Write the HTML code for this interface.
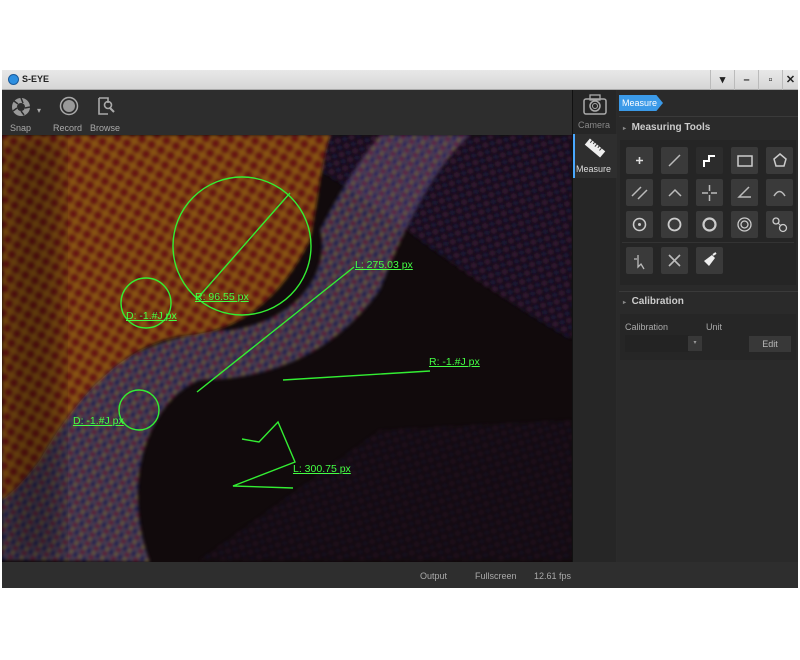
<!DOCTYPE html>
<html><head><meta charset="utf-8"><style>
*{margin:0;padding:0;box-sizing:border-box}
body{width:800px;height:660px;background:#fff;font-family:"Liberation Sans",sans-serif;position:relative;overflow:hidden}
.win{position:absolute;left:2px;top:70px;width:796px;height:518px;background:#2b2b2b}
.title{position:absolute;left:0;top:0;width:796px;height:20px;background:linear-gradient(#e8e8e8,#d6d6d6);border-bottom:1px solid #aaa}
.title .t{position:absolute;left:20px;top:4px;font-size:9px;font-weight:bold;color:#222}
.logo{position:absolute;left:6px;top:4px;width:11px;height:11px;border-radius:50%;background:#2d8fe0;border:1px solid #1a5a9a}
.wb{position:absolute;top:0;width:24px;height:20px;border-left:1px solid #bbb;font-size:11px;text-align:center;line-height:20px;color:#222;font-weight:bold}
.tb{position:absolute;left:0;top:20px;width:570px;height:45px;background:#2d2d2d}
.tl{position:absolute;top:33px;font-size:9px;color:#aaa}
.img{position:absolute;left:0;top:65px;width:570px;height:427px;background:#150a0e;overflow:hidden}
.bot{position:absolute;left:0;top:492px;width:796px;height:26px;background:#2e2e2e;font-size:9px;color:#aaa}
.bot span{position:absolute;top:9px}
.side{position:absolute;left:570px;top:20px;width:44px;height:472px;background:#262626;border-left:1px solid #111}
.panel{position:absolute;left:615px;top:20px;width:181px;height:472px;background:#2a2a2a}
.btn{position:absolute;width:27px;height:27px;background:#3a3a3a;border-radius:2px}
.btn svg{width:27px;height:27px}
.lab{position:absolute;color:#4f4;font-size:10.5px;text-decoration:underline;white-space:nowrap}
</style></head><body>
<div class="win">
 <div class="title"><div class="logo"></div><div class="t">S-EYE</div>
  <div class="wb" style="left:708px">▾</div><div class="wb" style="left:732px">–</div><div class="wb" style="left:756px">▫</div><div class="wb" style="left:780px;width:16px">✕</div></div>
 <div class="tb">
  <svg style="position:absolute;left:8px;top:6px" width="22" height="22" viewBox="0 0 22 22"><circle cx="11" cy="11" r="9" fill="#999"/><circle cx="11" cy="11" r="4" fill="#2d2d2d"/><path d="M11 2L13 7M20 11L15 12M14 19L11 15M3 15L7 12M4 5L8 8" stroke="#2d2d2d" stroke-width="1.5"/></svg>
  <div style="position:absolute;left:35px;top:16px;font-size:8px;color:#aaa">▾</div>
  <div class="tl" style="left:8px">Snap</div>
  <svg style="position:absolute;left:57px;top:6px" width="20" height="20"><circle cx="10" cy="10" r="8.5" fill="none" stroke="#aaa" stroke-width="1.5"/><circle cx="10" cy="10" r="6" fill="#999"/></svg>
  <div class="tl" style="left:51px">Record</div>
  <svg style="position:absolute;left:95px;top:6px" width="18" height="20"><path d="M2 2h9v5M2 2v16h9" fill="none" stroke="#aaa" stroke-width="1.6"/><circle cx="11" cy="9" r="3.5" fill="none" stroke="#aaa" stroke-width="1.6"/><path d="M13 12l4 4" stroke="#aaa" stroke-width="2"/></svg>
  <div class="tl" style="left:88px">Browse</div>
 </div>
 <div class="img">
  <svg width="570" height="427" viewBox="2 135 570 427">
   <defs>
    <pattern id="po" width="11" height="11" patternUnits="userSpaceOnUse" patternTransform="rotate(30)"><rect width="11" height="11" fill="#a06418"/><circle cx="5.5" cy="5.5" r="4.6" fill="#7a1c14"/></pattern>
    <pattern id="pb" width="10" height="10" patternUnits="userSpaceOnUse" patternTransform="rotate(30)"><rect width="10" height="10" fill="#5a5470"/><circle cx="2.5" cy="2.5" r="2.6" fill="#22226a"/><circle cx="7.5" cy="7" r="2.6" fill="#7a1a44"/><circle cx="7.5" cy="2" r="1.6" fill="#9a8a30"/></pattern>
    <pattern id="pd" width="10" height="10" patternUnits="userSpaceOnUse" patternTransform="rotate(30)"><rect width="10" height="10" fill="#160b12"/><circle cx="3" cy="3" r="2.4" fill="#3a1a3a"/><circle cx="8" cy="8" r="2" fill="#1a1a44"/></pattern>
    <filter id="bl"><feGaussianBlur stdDeviation="1.5"/></filter>
    <filter id="bl2"><feGaussianBlur stdDeviation="12"/></filter>
   </defs>
   <rect x="2" y="135" width="570" height="427" fill="#110a0c"/>
   <path d="M230 135 H572 V340 C520 310 460 270 420 240 C380 210 340 180 300 160Z" fill="url(#pd)" filter="url(#bl)"/>
   <path d="M2 560 V420 C80 380 160 330 230 330 C300 320 330 270 320 230 C340 190 360 160 380 135 H470 C430 170 400 240 380 290 C330 360 260 380 200 380 C150 400 120 480 150 562Z" fill="url(#pb)" filter="url(#bl)" opacity="0.7"/>
   <path d="M2 135 H330 C320 170 318 200 310 240 C280 300 240 330 190 335 C130 340 80 390 40 460 C25 480 10 495 2 500Z" fill="url(#po)" filter="url(#bl)"/>
   <path d="M2 135 H330 C320 170 318 200 310 240 C280 300 240 330 190 335 C130 340 80 390 40 460 C25 480 10 495 2 500Z" fill="#000" opacity="0.15"/>
   <rect x="2" y="135" width="60" height="427" fill="#000" opacity="0.3" filter="url(#bl2)"/>
   <path d="M380 430 L572 420 V560 H200Z" fill="url(#pd)" opacity="0.4" filter="url(#bl)"/>
   <g stroke="#3e3" stroke-width="1.4" fill="none">
    <circle cx="242" cy="246" r="69"/>
    <line x1="196" y1="300" x2="290" y2="193"/>
    <circle cx="146" cy="303" r="25"/>
    <circle cx="139" cy="410" r="20"/>
    <line x1="197" y1="392" x2="354" y2="267"/>
    <line x1="283" y1="380" x2="430" y2="371"/>
    <polyline points="242,439 259,442 278,422 295,462 233,486 293,488"/>
   </g>
  </svg>
  <div class="lab" style="left:353px;top:124px">L: 275.03 px</div>
  <div class="lab" style="left:193px;top:156px">R: 96.55 px</div>
  <div class="lab" style="left:124px;top:175px">D: -1.#J px</div>
  <div class="lab" style="left:427px;top:221px">R: -1.#J px</div>
  <div class="lab" style="left:71px;top:280px">D: -1.#J px</div>
  <div class="lab" style="left:291px;top:328px">L: 300.75 px</div>
 </div>
 <div class="side">
  <svg style="position:absolute;left:10px;top:3px" width="24" height="22"><rect x="1" y="6" width="22" height="15" rx="2" fill="none" stroke="#aaa" stroke-width="1.5"/><rect x="7" y="2" width="10" height="5" fill="none" stroke="#aaa" stroke-width="1.3"/><circle cx="12" cy="13" r="5" fill="none" stroke="#aaa" stroke-width="1.5"/><circle cx="12" cy="13" r="2.5" fill="none" stroke="#aaa"/></svg>
  <div style="position:absolute;left:5px;top:30px;font-size:9px;color:#888">Camera</div>
  <div style="position:absolute;left:0;top:44px;width:44px;height:44px;background:#2e2e2e;border-left:2px solid #4aa8ff"></div>
  <svg style="position:absolute;left:10px;top:46px" width="24" height="24"><g transform="rotate(40 12 12)"><rect x="2" y="8" width="20" height="8" fill="#eee"/><path d="M5 8v3M8 8v2M11 8v3M14 8v2M17 8v3" stroke="#333"/></g></svg>
  <div style="position:absolute;left:3px;top:74px;font-size:9px;color:#ddd">Measure</div>
 </div>
 <div class="panel">
  <div style="position:absolute;left:2px;top:5px;width:44px;height:16px;background:#3b9ae8;clip-path:polygon(0 0,85% 0,100% 50%,85% 100%,0 100%);font-size:9px;color:#fff;padding:3px 0 0 3px">Measure</div>
  <div style="position:absolute;left:2px;top:26px;width:179px;border-top:1px solid #3a3a3a"></div>
  <div style="position:absolute;left:6px;top:32px;font-size:10px;color:#ccc;font-weight:bold"><span style="font-size:6px;color:#888">▸</span>&nbsp; Measuring Tools</div>
  <div style="position:absolute;left:3px;top:50px;width:176px;height:145px;background:#252525"></div>
  <div class="btn" style="left:9px;top:57px"><svg><path d="M10 13.5h7M13.5 10v7" stroke="#ddd" stroke-width="1.6"/></svg></div>
  <div class="btn" style="left:44px;top:57px"><svg><path d="M8 19L19 8" stroke="#bbb" stroke-width="1.5"/></svg></div>
  <div class="btn" style="left:79px;top:57px;background:#2c2c2c"><svg><path d="M8 20v-6h5v-5h6" fill="none" stroke="#fff" stroke-width="2"/></svg></div>
  <div class="btn" style="left:114px;top:57px"><svg><rect x="7" y="9" width="14" height="10" fill="none" stroke="#ccc" stroke-width="1.5"/></svg></div>
  <div class="btn" style="left:149px;top:57px"><svg><path d="M14 7l6 5-2 7h-8l-2-7z" fill="none" stroke="#ccc" stroke-width="1.5"/></svg></div>
  <div class="btn" style="left:9px;top:89px"><svg><path d="M6 17L15 8M12 20L21 11" stroke="#bbb" stroke-width="1.5"/></svg></div>
  <div class="btn" style="left:44px;top:89px"><svg><path d="M8 17l6-6 6 6" fill="none" stroke="#bbb" stroke-width="1.5"/></svg></div>
  <div class="btn" style="left:79px;top:89px"><svg><path d="M6 14h6M15 14h6M13.5 6v6M13.5 16v6" stroke="#bbb" stroke-width="1.5"/></svg></div>
  <div class="btn" style="left:114px;top:89px"><svg><path d="M18 8L8 18h12" fill="none" stroke="#bbb" stroke-width="1.5"/></svg></div>
  <div class="btn" style="left:149px;top:89px"><svg><path d="M8 17q5.5-9 11 0" fill="none" stroke="#bbb" stroke-width="1.5"/></svg></div>
  <div class="btn" style="left:9px;top:121px"><svg><circle cx="13.5" cy="13.5" r="6" fill="none" stroke="#ccc" stroke-width="1.5"/><circle cx="13.5" cy="13.5" r="1.5" fill="#ccc"/></svg></div>
  <div class="btn" style="left:44px;top:121px"><svg><circle cx="13.5" cy="13.5" r="6" fill="none" stroke="#ccc" stroke-width="1.8"/></svg></div>
  <div class="btn" style="left:79px;top:121px"><svg><circle cx="13.5" cy="13.5" r="6" fill="none" stroke="#ccc" stroke-width="2.2"/></svg></div>
  <div class="btn" style="left:114px;top:121px"><svg><circle cx="13.5" cy="13.5" r="6.5" fill="none" stroke="#ccc" stroke-width="1.3"/><circle cx="13.5" cy="13.5" r="3.5" fill="none" stroke="#ccc" stroke-width="1.3"/></svg></div>
  <div class="btn" style="left:149px;top:121px"><svg><circle cx="10" cy="10" r="3" fill="none" stroke="#ccc" stroke-width="1.3"/><circle cx="17" cy="17" r="3.5" fill="none" stroke="#ccc" stroke-width="1.3"/><path d="M12 12l3 3" stroke="#ccc"/></svg></div>
  <div style="position:absolute;left:5px;top:152px;width:172px;border-top:1px solid #333"></div>
  <div class="btn" style="left:9px;top:157px"><svg><path d="M12 8v12l3-3 3 5M8 12h3" fill="none" stroke="#bbb" stroke-width="1.3"/></svg></div>
  <div class="btn" style="left:44px;top:157px"><svg><path d="M8 8q6 6 11 11M19 8q-6 6-11 11" fill="none" stroke="#bbb" stroke-width="1.6"/></svg></div>
  <div class="btn" style="left:79px;top:157px"><svg><path d="M8 14l8-6 3 3-6 8z" fill="#eee"/><path d="M17 8l3-2" stroke="#eee" stroke-width="2"/></svg></div>
  <div style="position:absolute;left:2px;top:201px;width:179px;border-top:1px solid #3a3a3a"></div>
  <div style="position:absolute;left:6px;top:206px;font-size:10px;color:#ccc;font-weight:bold"><span style="font-size:6px;color:#888">▸</span>&nbsp; Calibration</div>
  <div style="position:absolute;left:3px;top:224px;width:176px;height:46px;background:#262626"></div>
  <div style="position:absolute;left:8px;top:232px;font-size:9px;color:#aaa">Calibration</div>
  <div style="position:absolute;left:89px;top:232px;font-size:9px;color:#aaa">Unit</div>
  <div style="position:absolute;left:8px;top:245px;width:64px;height:17px;background:#232323"></div>
  <div style="position:absolute;left:71px;top:246px;width:14px;height:15px;background:#383838;font-size:6px;color:#999;text-align:center;line-height:15px">▾</div>
  <div style="position:absolute;left:132px;top:246px;width:42px;height:16px;background:#383838;font-size:9px;color:#bbb;text-align:center;line-height:16px">Edit</div>
 </div>
 <div class="bot"><span style="left:418px">Output</span><span style="left:473px">Fullscreen</span><span style="left:532px">12.61 fps</span></div>
</div>
</body></html>
